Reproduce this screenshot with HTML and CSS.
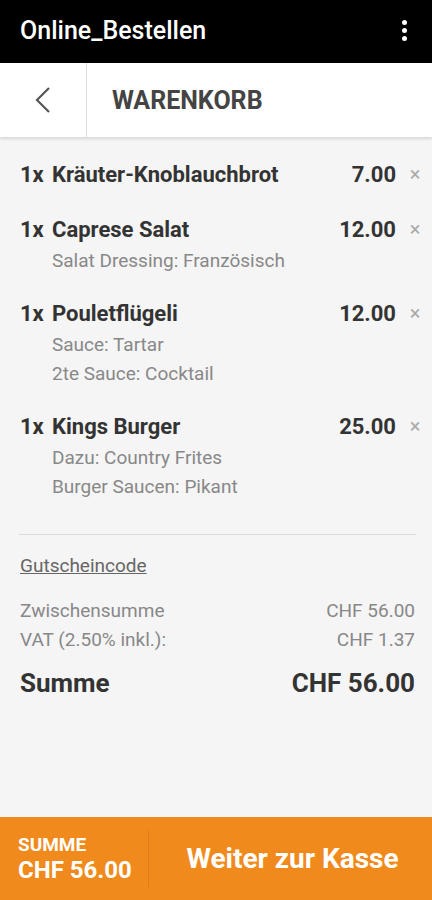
FILE: index.html
```html
<!DOCTYPE html>
<html lang="de">
<head>
    <meta charset="UTF-8">
    <meta name="viewport" content="width=device-width, initial-scale=1.0">
    <title>Warenkorb</title>
    <link rel="stylesheet" href="styles.css">
</head>
<body>
<div class="app">
    <div class="topbar">
        <div class="app-title">Online_Bestellen</div>
        <div class="menu"><span></span><span></span><span></span></div>
    </div>

    <div class="header">
        <div class="back">
            <svg width="18" height="28" viewBox="0 0 18 28"><path d="M15 2 L3 14 L15 26" fill="none" stroke="#555" stroke-width="2.2"/></svg>
        </div>
        <div class="page-title">WARENKORB</div>
    </div>

    <div class="cart">
        <div class="item">
            <div class="item-row">
                <span class="qty">1x</span>
                <span class="name">Kräuter-Knoblauchbrot</span>
                <span class="price">7.00</span>
                <span class="remove">×</span>
            </div>
        </div>
        <div class="item">
            <div class="item-row">
                <span class="qty">1x</span>
                <span class="name">Caprese Salat</span>
                <span class="price">12.00</span>
                <span class="remove">×</span>
            </div>
            <div class="opts">
                <div>Salat Dressing: Französisch</div>
            </div>
        </div>
        <div class="item">
            <div class="item-row">
                <span class="qty">1x</span>
                <span class="name">Pouletflügeli</span>
                <span class="price">12.00</span>
                <span class="remove">×</span>
            </div>
            <div class="opts">
                <div>Sauce: Tartar</div>
                <div>2te Sauce: Cocktail</div>
            </div>
        </div>
        <div class="item">
            <div class="item-row">
                <span class="qty">1x</span>
                <span class="name">Kings Burger</span>
                <span class="price">25.00</span>
                <span class="remove">×</span>
            </div>
            <div class="opts">
                <div>Dazu: Country Frites</div>
                <div>Burger Saucen: Pikant</div>
            </div>
        </div>

        <div class="totals">
            <div class="voucher-wrap"><a class="voucher">Gutscheincode</a></div>
            <div class="line small"><span>Zwischensumme</span><span>CHF 56.00</span></div>
            <div class="line small"><span>VAT (2.50% inkl.):</span><span>CHF 1.37</span></div>
            <div class="line big"><span>Summe</span><span>CHF 56.00</span></div>
        </div>
    </div>

    <div class="footer">
        <div class="sum">
            <div class="sum-label">SUMME</div>
            <div class="sum-value">CHF 56.00</div>
        </div>
        <div class="checkout">Weiter zur Kasse</div>
    </div>
</div>
</body>
</html>
```

FILE: styles.css
```css
body{
    margin:0;
    padding:0;
    font-family: Roboto, "Liberation Sans", sans-serif;
    background:#f5f5f5;
}
.app{
    height:900px;
    display:flex;
    flex-direction:column;
}

.topbar{
    height:63px;
    background:#000;
    color:#fff;
    display:flex;
    align-items:center;
    justify-content:space-between;
    padding:0 25px 0 20px;
}
.app-title{
    font-size:25px;
    font-weight:500;
    margin-top:-3px;
}
.menu{
    display:flex;
    flex-direction:column;
    gap:3px;
    margin-top:-2px;
}
.menu span{
    width:5px;
    height:5px;
    border-radius:50%;
    background:#fff;
}

.header{
    height:74px;
    background:#fff;
    display:flex;
    box-shadow:0 2px 3px rgba(0,0,0,0.12);
}
.back{
    width:86px;
    border-right:1px solid #ddd;
    display:flex;
    align-items:center;
    justify-content:center;
}
.page-title{
    display:flex;
    align-items:center;
    padding-left:25px;
    font-size:25px;
    font-weight:bold;
    color:#444;
}

.cart{
    flex:1;
    padding:22px 17px 0 20px;
}
.item{
    margin-bottom:23px;
}
.item:first-child{
    margin-bottom:25px;
}
.item-row{
    display:flex;
    align-items:center;
    color:#333;
    font-size:22px;
    font-weight:bold;
    height:30px;
    margin-right:-12px;
}
.qty{
    width:32px;
}
.name{
    flex:1;
}
.remove{
    width:24px;
    margin-left:7px;
    text-align:center;
    color:#aaa;
    font-weight:normal;
    font-size:20px;
}
.opts{
    padding-left:32px;
    margin-top:2px;
    color:#888;
    font-size:19px;
    line-height:29px;
}

.totals{
    border-top:1px solid #ddd;
    margin:33px -1px 0 -1px;
    padding:16px 1px 0 1px;
}
.voucher{
    color:#666;
    font-size:19px;
    line-height:29px;
    text-decoration:underline;
}
.voucher-wrap{
    margin-bottom:16px;
}
.line{
    display:flex;
    justify-content:space-between;
}
.line.small{
    color:#888;
    font-size:19px;
    line-height:29px;
}
.line.big{
    color:#333;
    font-size:26px;
    font-weight:bold;
    line-height:34px;
    margin-top:12px;
}

.footer{
    height:83px;
    background:#f08a1c;
    color:#fff;
    display:flex;
    align-items:center;
}
.sum{
    width:130px;
    padding-left:18px;
    border-right:1px solid rgba(0,0,0,0.08);
    height:57px;
    display:flex;
    flex-direction:column;
    justify-content:center;
}
.sum-label{
    font-size:19px;
    font-weight:bold;
    line-height:22px;
}
.sum-value{
    font-size:24px;
    font-weight:bold;
    line-height:28px;
}
.checkout{
    flex:1;
    text-align:center;
    font-size:28px;
    font-weight:bold;
    padding-left:4px;
}
```
